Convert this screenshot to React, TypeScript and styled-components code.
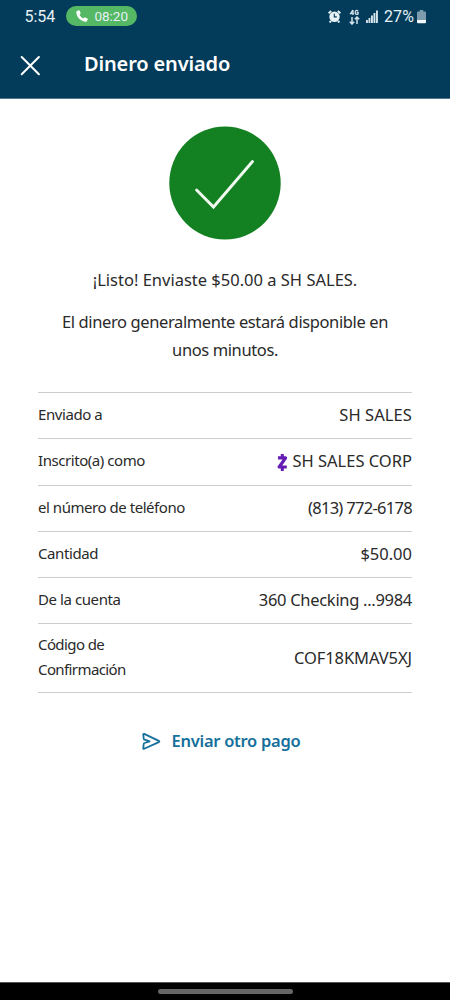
import React from "react";
import styled, { createGlobalStyle } from "styled-components";

const GlobalStyle = createGlobalStyle`
  * { box-sizing: border-box; }
  body { margin: 0; background: #fff; }
`;

const Screen = styled.div`
  width: 450px;
  height: 1000px;
  display: flex;
  flex-direction: column;
  overflow: hidden;
  background: #fff;
  color: #2a2a2a;
  font-family: "Noto Sans", "Open Sans", sans-serif;
`;

const Header = styled.header`
  height: 99px;
  flex: none;
  background: #033c5a;
  border-bottom: 1px solid #52788c;
  color: #fff;
`;

const StatusBar = styled.div`
  height: 33px;
  padding: 0 24px 0 24.5px;
  display: flex;
  align-items: center;
  font-family: Roboto, sans-serif;
  color: #e6f1f6;
`;

const Clock = styled.span`
  width: 41.5px;
  font-size: 16px;
  line-height: 33px;
`;

const CallPill = styled.span`
  width: 71px;
  height: 20px;
  margin-top: -1px;
  padding: 0 9px 0 10px;
  border-radius: 10px;
  background: #55b865;
  display: flex;
  align-items: center;
  justify-content: space-between;
  font-size: 13.5px;
  line-height: 20px;
`;

const StatusIcons = styled.div`
  margin-left: auto;
  display: flex;
  align-items: center;
`;

const Percent = styled.span`
  margin-left: 6px;
  font-size: 16px;
  letter-spacing: 0.1px;
`;

const TitleBar = styled.div`
  height: 65px;
  padding-left: 20px;
  display: flex;
  align-items: center;
`;

const CloseButton = styled.button`
  width: 21px;
  height: 21px;
  padding: 0;
  border: 0;
  background: none;
  color: #fff;
`;

const Glyph = styled.svg`
  display: block;
  flex: none;
`;

const Title = styled.h1`
  margin: -4px 0 0 43px;
  font-size: 20px;
  font-weight: 600;
  line-height: 28px;
  letter-spacing: -0.15px;
`;

const Content = styled.main`
  flex: 1;
  padding: 27px 38px 0;
  display: flex;
  flex-direction: column;
  align-items: center;
`;

const Badge = styled.div`
  margin-right: 1px;
`;

const Message = styled.p<{ $track?: number; $top: number }>`
  margin: ${(p) => p.$top}px 0 0;
  font-size: 16.5px;
  line-height: 28px;
  text-align: center;
  white-space: nowrap;
  letter-spacing: ${(p) => p.$track ?? 0}px;
`;

const Details = styled.dl`
  width: 374px;
  margin: 28px 0 0;
  border-top: 1px solid #cdcdcd;
`;

const Row = styled.div<{ $tall?: boolean }>`
  height: ${(p) => (p.$tall ? 69 : 46.25)}px;
  padding-bottom: 2px;
  border-bottom: 1px solid #cdcdcd;
  display: flex;
  align-items: center;
  justify-content: space-between;
`;

const Label = styled.dt<{ $track?: number }>`
  font-size: 15px;
  line-height: 25px;
  white-space: pre-line;
  letter-spacing: ${(p) => p.$track ?? 0}px;
`;

const Value = styled.dd<{ $track?: number }>`
  margin: 0;
  display: flex;
  align-items: center;
  gap: 4px;
  font-size: 16.5px;
  line-height: 25px;
  white-space: nowrap;
  letter-spacing: ${(p) => p.$track ?? 0}px;
`;

const SendAgain = styled.button`
  margin: 35px 0 0 -8px;
  padding: 0;
  border: 0;
  background: none;
  display: flex;
  align-items: center;
  gap: 11px;
  color: #16709c;
  font-family: inherit;
  font-size: 16.5px;
  font-weight: 600;
  line-height: 26px;
  letter-spacing: -0.27px;
`;

const NavBar = styled.footer`
  height: 18px;
  flex: none;
  background: #000;
  border-top: 1px solid #555;
  display: flex;
  justify-content: center;
  padding-top: 6px;
`;

const NavHandle = styled.span`
  width: 135px;
  height: 5px;
  border-radius: 3px;
  background: #666;
`;

const PhoneIcon = () => (
  <Glyph width="12" height="12" viewBox="0 0 12 12" fill="#fff">
    <path d="M1 1.1 2.8.2Q3.3 0 3.6.6L4.6 2.9Q4.8 3.4 4.4 3.8L3.5 4.8Q4.7 7.3 7.2 8.5L8.3 7.5Q8.6 7.2 9.1 7.4L11.4 8.5Q12 8.8 11.8 9.3L11 11Q10.7 11.7 10 11.7C4.5 11.4.6 7.2.3 2Q.3 1.4 1 1.1Z" />
  </Glyph>
);

const AlarmIcon = () => (
  <Glyph width="13" height="13" viewBox="0 0 13 13">
    <circle cx="6.5" cy="6.7" r="5.2" fill="#e6f1f6" />
    <path d="M.6 3.3 3.2 1M12.4 3.3 9.8 1M3 11 1.6 12.5M10 11l1.4 1.5" stroke="#e6f1f6" strokeWidth="1.9" />
    <path d="M6.3 3.8v3.1h2.5" stroke="#033c5a" strokeWidth="1.1" fill="none" />
  </Glyph>
);

const NetworkIcon = () => (
  <Glyph width="11" height="16" viewBox="0 0 11 16" fill="none" stroke="#d5e4eb" strokeWidth="1.3">
    <path d="M3.8 1 1.6 4.5h3.2M4 1v5M9.2 2.2Q7 .2 6.2 3.2 6.3 6.5 9.1 5V3.7H7.7" />
    <path d="M3 15V8M.8 12.8 3 15l2.2-2.2M8 15V8M5.8 10.2 8 8l2.2 2.2" strokeWidth="1.5" />
  </Glyph>
);

const SignalIcon = () => (
  <Glyph width="12" height="13" viewBox="0 0 12 13" fill="#d5e4eb">
    <rect x="0" y="10" width="1.9" height="3" />
    <rect x="2.5" y="8" width="1.9" height="5" />
    <rect x="5" y="5.5" width="1.9" height="7.5" />
    <rect x="7.5" y="3" width="1.9" height="10" />
    <rect x="10" y="0.5" width="1.9" height="12.5" />
  </Glyph>
);

const BatteryIcon = () => (
  <Glyph width="9" height="14" viewBox="0 0 9 14">
    <path d="M2.7 0h3.6v1.4H8Q9 1.4 9 2.4V10H0V2.4Q0 1.4 1 1.4h1.7Z" fill="#7e9cae" />
    <path d="M0 10h9v2.3q0 1-1 1H1q-1 0-1-1Z" fill="#f2f8fb" />
  </Glyph>
);

const CloseIcon = () => (
  <Glyph width="21" height="21" viewBox="0 0 21 21">
    <path d="M1.7 2 18.9 19.2M18.9 2 1.7 19.2" stroke="#fff" strokeWidth="2" strokeLinecap="round" />
  </Glyph>
);

const SuccessMark = () => (
  <Glyph width="112" height="114" viewBox="0 0 112 114">
    <ellipse cx="56" cy="57" rx="55.7" ry="56.5" fill="#138021" />
    <path d="M27.6 64 44.5 81 83.5 35.5" fill="none" stroke="#f0faf0" strokeWidth="2.9" strokeLinecap="round" />
  </Glyph>
);

const ZelleGlyph = styled(Glyph)`
  margin-top: 3px;
`;

const ZelleMark = () => (
  <ZelleGlyph width="11" height="17" viewBox="0 0 11 17">
    <path d="M5.3 0v3.5M5.3 13.5V17" stroke="#641cb4" strokeWidth="3" />
    <path d="M1 3.8H8.6L2.2 13H9.8" fill="none" stroke="#641cb4" strokeWidth="3.2" strokeLinejoin="round" />
  </ZelleGlyph>
);

const SendIcon = () => (
  <Glyph width="19" height="18" viewBox="0 0 19 18">
    <path
      d="M2.2 1.9Q1.2 1.5 1.3 2.6L1.7 6.6Q1.8 7.4 2.6 7.6L7.6 9.4 2.6 11Q1.8 11.2 1.7 12L1.3 16.2Q1.2 17.3 2.2 16.8L16.8 10.1Q17.9 9.5 16.8 8.9Z"
      fill="none"
      stroke="#16709c"
      strokeWidth="1.8"
      strokeLinejoin="round"
    />
  </Glyph>
);

type Detail = {
  label: string;
  value: string;
  labelTrack?: number;
  valueTrack?: number;
  zelle?: boolean;
  tall?: boolean;
};

const details: Detail[] = [
  { label: "Enviado a", value: "SH SALES", labelTrack: -0.42, valueTrack: 0.08 },
  { label: "Inscrito(a) como", value: "SH SALES CORP", labelTrack: -0.44, zelle: true },
  { label: "el número de teléfono", value: "(813) 772-6178", labelTrack: -0.46, valueTrack: -0.7 },
  { label: "Cantidad", value: "$50.00", labelTrack: -0.4 },
  { label: "De la cuenta", value: "360 Checking ...9984", labelTrack: -0.42, valueTrack: -0.3 },
  { label: "Código de\nConfirmación", value: "COF18KMAV5XJ", labelTrack: -0.6, valueTrack: -0.08, tall: true },
];

export default function App() {
  return (
    <Screen>
      <GlobalStyle />
      <Header>
        <StatusBar>
          <Clock>5:54</Clock>
          <CallPill>
            <PhoneIcon />
            08:20
          </CallPill>
          <StatusIcons>
            <AlarmIcon />
            <Glyph width="8" height="1" />
            <NetworkIcon />
            <Glyph width="6" height="1" />
            <SignalIcon />
            <Percent>27%</Percent>
            <Glyph width="3" height="1" />
            <BatteryIcon />
          </StatusIcons>
        </StatusBar>
        <TitleBar>
          <CloseButton aria-label="Cerrar">
            <CloseIcon />
          </CloseButton>
          <Title>Dinero enviado</Title>
        </TitleBar>
      </Header>
      <Content>
        <Badge>
          <SuccessMark />
        </Badge>
        <Message $top={26}>¡Listo! Enviaste $50.00 a SH SALES.</Message>
        <Message $top={14} $track={-0.39}>
          El dinero generalmente estará disponible en
          <br />
          unos minutos.
        </Message>
        <Details>
          {details.map((d) => (
            <Row key={d.label} $tall={d.tall}>
              <Label $track={d.labelTrack}>{d.label}</Label>
              <Value $track={d.valueTrack}>
                {d.zelle && <ZelleMark />}
                {d.value}
              </Value>
            </Row>
          ))}
        </Details>
        <SendAgain>
          <SendIcon />
          Enviar otro pago
        </SendAgain>
      </Content>
      <NavBar>
        <NavHandle />
      </NavBar>
    </Screen>
  );
}
